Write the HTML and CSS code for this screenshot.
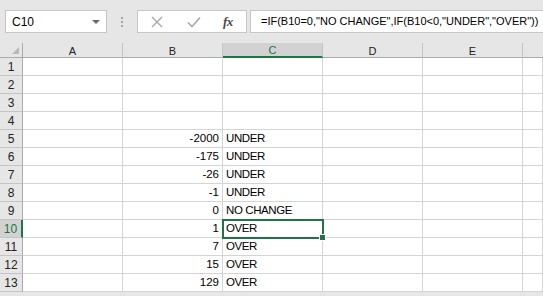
FILE: index.html
```html
<!DOCTYPE html>
<html lang="en">
<head>
    <meta charset="UTF-8">
    <meta name="viewport" content="width=device-width, initial-scale=1.0">
    <title>Sheet</title>
    <link rel="stylesheet" href="styles.css">
</head>
<body>
    <!-- Name box + formula bar -->
    <div class="topbar">
        <div class="namebox">
            <span>C10</span>
            <svg class="arrow" width="8" height="4" viewBox="0 0 8 4"><path d="M0 0H8L4 4Z" fill="#6b6b6b"/></svg>
        </div>
        <div class="grip">
            <i></i><i></i><i></i>
        </div>
        <div class="fbuttons">
            <svg class="icon cancel" width="12" height="12" viewBox="0 0 12 12"><path d="M1 1L11 11M11 1L1 11" stroke="#a8a8a8" stroke-width="1.4" fill="none"/></svg>
            <svg class="icon enter" width="14" height="12" viewBox="0 0 14 12"><path d="M1 6.5L5 10.5L13 1.5" stroke="#a8a8a8" stroke-width="1.6" fill="none"/></svg>
            <span class="fx">fx</span>
        </div>
        <div class="formula">=IF(B10=0,"NO CHANGE",IF(B10&lt;0,"UNDER","OVER"))</div>
    </div>

    <!-- Grid -->
    <div class="sheet" id="sheet"></div>

    <script>
        const cols = ["A", "B", "C", "D", "E", ""];
        const values = { 5: -2000, 6: -175, 7: -26, 8: -1, 9: 0, 10: 1, 11: 7, 12: 15, 13: 129 };

        function label(n) {
            if (n === 0) return "NO CHANGE";
            return n < 0 ? "UNDER" : "OVER";
        }

        const sheet = document.getElementById("sheet");

        // header row
        const corner = document.createElement("div");
        corner.className = "hcell corner";
        corner.innerHTML = '<span class="tri"></span>';
        sheet.appendChild(corner);
        cols.forEach(c => {
            const h = document.createElement("div");
            h.className = "hcell colhead" + (c === "C" ? " active" : "") + (c === "" ? " last" : "");
            h.textContent = c;
            sheet.appendChild(h);
        });

        // data rows
        for (let r = 1; r <= 13; r++) {
            const rh = document.createElement("div");
            rh.className = "hcell rowhead" + (r === 10 ? " active" : "");
            rh.textContent = r;
            sheet.appendChild(rh);

            cols.forEach(c => {
                const cell = document.createElement("div");
                cell.className = "cell";
                if (c === "B" && r in values) {
                    cell.classList.add("num");
                    cell.textContent = values[r];
                }
                if (c === "C" && r in values) {
                    cell.classList.add("text");
                    cell.textContent = label(values[r]);
                }
                if (c === "C" && r === 10) cell.classList.add("selected");
                sheet.appendChild(cell);
            });
        }
    </script>
</body>
</html>
```

FILE: styles.css
```css
body {
    margin: 0;
    background-color: #e6e6e6;
    font-family: "Liberation Sans", Arial, sans-serif;
    font-size: 11px;
    color: #000;
    overflow: hidden;
}

.topbar {
    height: 43px;
    display: flex;
    align-items: flex-start;
    padding-top: 10px;
    box-sizing: border-box;
}

.namebox {
    flex-shrink: 0;
    margin-left: 5px;
    width: 102px;
    height: 23px;
    box-sizing: border-box;
    background-color: #fff;
    border: 1px solid #c6c6c6;
    display: flex;
    align-items: center;
    padding: 0 6px 0 6px;
    font-size: 12px;
}

.namebox span {
    flex-grow: 1;
}

.grip {
    flex-shrink: 0;
    width: 30px;
    height: 23px;
    display: flex;
    flex-direction: column;
    align-items: center;
    justify-content: center;
    gap: 2px;
}

.grip i {
    width: 2px;
    height: 2px;
    background-color: #a6a6a6;
}

.fbuttons {
    flex-shrink: 0;
    width: 110px;
    height: 23px;
    box-sizing: border-box;
    background-color: #fff;
    border: 1px solid #c6c6c6;
    display: flex;
    align-items: center;
    padding-left: 13px;
}

.icon.cancel {
    margin-right: 24px;
}

.icon.enter {
    margin-right: 22px;
}

.fx {
    font-family: "Liberation Serif", "Times New Roman", serif;
    font-style: italic;
    font-weight: bold;
    font-size: 13px;
    color: #4a4a4a;
    letter-spacing: -0.5px;
}

.formula {
    flex-grow: 1;
    min-width: 0;
    overflow: hidden;
    margin-left: 3px;
    height: 23px;
    box-sizing: border-box;
    background-color: #fff;
    border: 1px solid #c6c6c6;
    border-right: none;
    padding-left: 10px;
    line-height: 21px;
    font-size: 11px;
    white-space: nowrap;
}

.sheet {
    display: grid;
    grid-template-columns: 23px repeat(5, 100px) 1fr;
    grid-template-rows: 15px repeat(13, 18px);
    background-color: #fff;
}

.hcell {
    background-color: #e6e6e6;
    box-sizing: border-box;
    color: #222;
    display: flex;
    align-items: center;
    justify-content: center;
}

.corner {
    border-right: 1px solid #ababab;
    border-bottom: 1px solid #ababab;
    position: relative;
}

.tri {
    position: absolute;
    right: 3px;
    bottom: 3px;
    width: 0;
    height: 0;
    border-left: 7px solid transparent;
    border-bottom: 7px solid #b9b9b9;
}

.colhead {
    border-right: 1px solid #c4c4c4;
    border-bottom: 1px solid #ababab;
    line-height: 14px;
    padding-top: 1px;
}

.colhead.last {
    border-right: none;
}

.colhead.active {
    background-color: #d2d2d2;
    color: #217346;
    border-bottom: 2px solid #217346;
}

.rowhead {
    border-right: 1px solid #ababab;
    border-bottom: 1px solid #c4c4c4;
    font-size: 12px;
}

.rowhead.active {
    background-color: #d2d2d2;
    color: #217346;
    border-right: 2px solid #217346;
}

.cell {
    box-sizing: border-box;
    border-right: 1px solid #d4d4d4;
    border-bottom: 1px solid #d4d4d4;
    padding: 0 3px;
    line-height: 17px;
    white-space: nowrap;
    font-size: 11.5px;
}

.cell.num {
    text-align: right;
}

.cell.text {
    letter-spacing: -0.4px;
}

.selected {
    position: relative;
    outline: 2px solid #217346;
    outline-offset: -1px;
}

.selected::after {
    content: "";
    position: absolute;
    right: -4px;
    bottom: -4px;
    width: 5px;
    height: 5px;
    background-color: #217346;
    border: 1px solid #fff;
}
```
